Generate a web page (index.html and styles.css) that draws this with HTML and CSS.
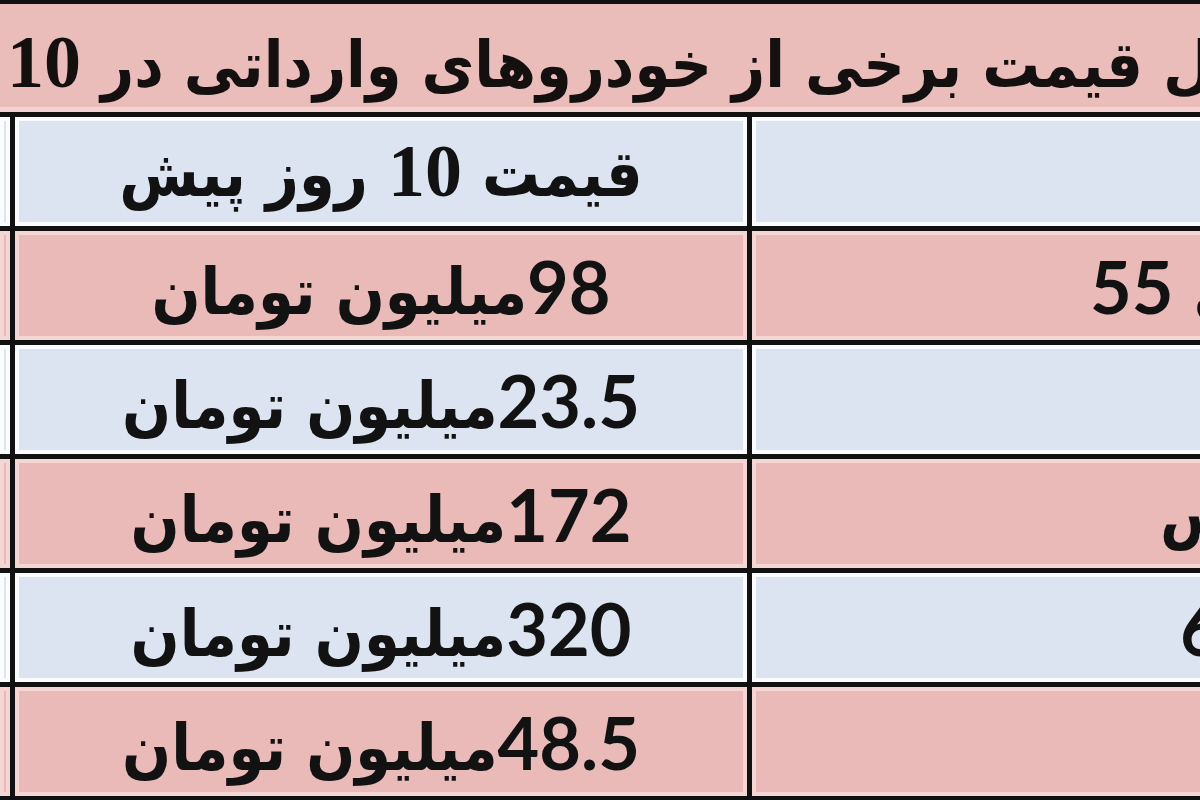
FILE: index.html
```html
<!DOCTYPE html>
<html lang="fa">
<head>
<meta charset="utf-8">
<title>قیمت خودروهای وارداتی</title>
<link rel="stylesheet" href="styles.css">
</head>
<body>
<div class="sheet">
  <div class="title"><span class="title-text" dir="rtl">جدول قیمت برخی از خودروهای وارداتی در <span class="tnum">10</span></span></div>
  <div class="grid">
    <div class="cell blue"></div>
    <div class="cell blue mid"><span dir="rtl">قیمت <span class="tnum">10</span> روز پیش</span></div>
    <div class="cell blue side"></div>

    <div class="cell pink"></div>
    <div class="cell pink mid"><span dir="rtl"><span class="num">98</span>میلیون تومان</span></div>
    <div class="cell pink side off-a"><span dir="rtl">هیوندای <span class="num">55</span></span></div>

    <div class="cell blue"></div>
    <div class="cell blue mid"><span dir="rtl"><span class="num">23.5</span>میلیون تومان</span></div>
    <div class="cell blue side"></div>

    <div class="cell pink"></div>
    <div class="cell pink mid"><span dir="rtl"><span class="num">172</span>میلیون تومان</span></div>
    <div class="cell pink side off-b"><span dir="rtl">لکسوس</span></div>

    <div class="cell blue"></div>
    <div class="cell blue mid"><span dir="rtl"><span class="num">320</span>میلیون تومان</span></div>
    <div class="cell blue side off-c"><span dir="rtl">مزدا <span class="num">6</span></span></div>

    <div class="cell pink"></div>
    <div class="cell pink mid"><span dir="rtl"><span class="num">48.5</span>میلیون تومان</span></div>
    <div class="cell pink side"></div>
  </div>
</div>
</body>
</html>
```
FILE: styles.css
```css
html, body {
  margin: 0;
  padding: 0;
  width: 1200px;
  height: 800px;
  overflow: hidden;
  background: #ffffff;
}

.sheet {
  background: #111111;
  padding-top: 4px;
  width: 1800px;
  height: 820px;
}

.title {
  height: 108px;
  box-sizing: border-box;
  padding: 8px 0 0 7px;
  background: #eabdbb;
  box-shadow: inset 0 -5px 0 #f3d3d2;
  display: flex;
  align-items: center;
  font-family: "DejaVu Sans", sans-serif;
  font-stretch: condensed;
  font-weight: bold;
  font-size: 64px;
  color: #141010;
}

.title-text {
  white-space: nowrap;
  flex: none;
}

.tnum {
  font-family: "Liberation Serif", serif;
  font-size: 74px;
}

.grid {
  margin-top: 5px;
  display: grid;
  grid-template-columns: 10px 732px 1000px;
  grid-auto-rows: 109px;
  column-gap: 5px;
  row-gap: 5px;
}

.cell {
  display: flex;
  align-items: center;
  font-family: "DejaVu Sans", sans-serif;
  font-stretch: condensed;
  font-weight: bold;
  font-size: 64px;
  color: #121212;
}

.cell > span {
  white-space: nowrap;
  flex: none;
}

.num {
  font-family: "Lato", sans-serif;
  font-size: 72px;
}

.blue {
  background: #dce4f2;
  box-shadow: inset 0 0 0 4px #fafcff;
}

.pink {
  background: #e9bab8;
  box-shadow: inset 0 0 0 4px #f4d6d5;
}

.mid {
  justify-content: center;
}

.off-a { padding-left: 338px; }
.off-b { padding-left: 408px; }
.off-c { padding-left: 428px; }
```
